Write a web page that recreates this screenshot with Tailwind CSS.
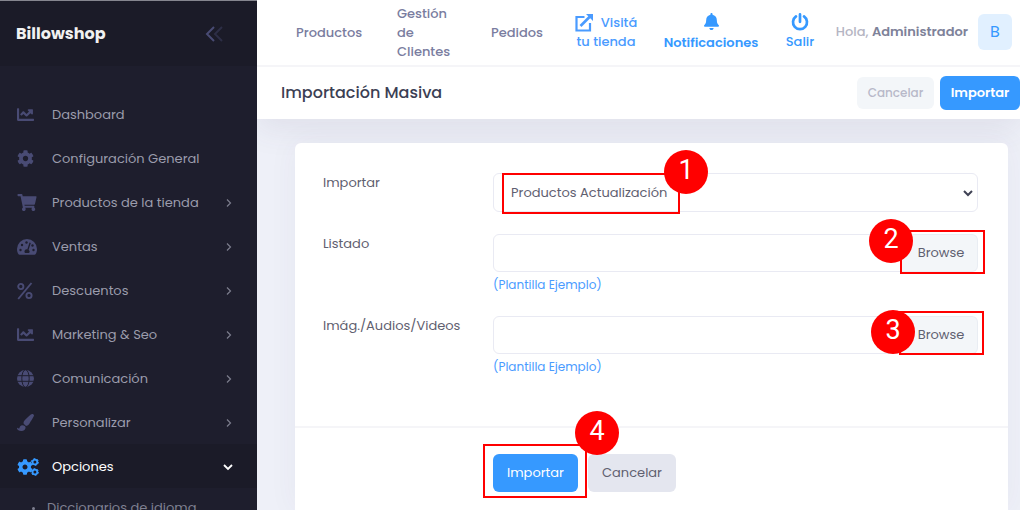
<!DOCTYPE html>
<html lang="es">
<head>
<meta charset="utf-8">
<meta name="viewport" content="width=device-width, initial-scale=1">
<title>Billowshop - Importación Masiva</title>
<script src="https://cdn.jsdelivr.net/npm/@tailwindcss/browser@4"></script>
</head>
<body class="flex h-screen overflow-hidden bg-[#eef0f8] font-[Poppins,Inter,sans-serif] text-[13px] text-[#5f6070]">
<svg class="hidden" aria-hidden="true">
  <symbol id="chart" viewBox="0 0 512 512"><path fill="currentColor" d="M496 384H64V80c0-8.84-7.16-16-16-16H16C7.16 64 0 71.16 0 80v336c0 17.67 14.33 32 32 32h464c8.84 0 16-7.16 16-16v-32c0-8.84-7.16-16-16-16zM464 96H345.94c-21.38 0-32.09 25.85-16.97 40.97l32.4 32.4L288 242.75l-73.37-73.37c-12.5-12.5-32.76-12.5-45.25 0l-68.69 68.69c-6.25 6.25-6.25 16.38 0 22.63l22.62 22.62c6.25 6.25 16.38 6.25 22.63 0L192 237.25l73.37 73.37c12.5 12.5 32.76 12.5 45.25 0l96-96 32.4 32.4c15.12 15.12 40.97 4.41 40.97-16.97V112c.01-8.84-7.15-16-15.99-16z"/></symbol>
  <symbol id="cog" viewBox="0 0 512 512"><path fill="currentColor" d="M487.4 315.7l-42.6-24.6c4.3-23.2 4.3-47 0-70.2l42.6-24.6c4.9-2.8 7.1-8.6 5.5-14-11.1-35.6-30-67.8-54.7-94.6-3.8-4.1-10-5.1-14.8-2.3L380.8 110c-17.9-15.4-38.5-27.3-60.8-35.1V25.8c0-5.6-3.9-10.5-9.4-11.7-36.7-8.2-74.3-7.8-109.2 0-5.5 1.2-9.4 6.1-9.4 11.7V75c-22.2 7.9-42.8 19.8-60.8 35.1L88.7 85.5c-4.9-2.8-11-1.9-14.8 2.3-24.7 26.7-43.6 58.9-54.7 94.6-1.7 5.4.6 11.2 5.5 14L67.3 221c-4.3 23.2-4.3 47 0 70.2l-42.6 24.6c-4.9 2.8-7.1 8.6-5.5 14 11.1 35.6 30 67.8 54.7 94.6 3.8 4.1 10 5.1 14.8 2.3l42.6-24.6c17.9 15.4 38.5 27.3 60.8 35.1v49.2c0 5.6 3.9 10.5 9.4 11.7 36.7 8.2 74.3 7.8 109.2 0 5.5-1.2 9.4-6.1 9.4-11.7v-49.2c22.2-7.9 42.8-19.8 60.8-35.1l42.6 24.6c4.9 2.8 11 1.9 14.8-2.3 24.7-26.7 43.6-58.9 54.7-94.6 1.5-5.5-.7-11.3-5.6-14.1zM256 336c-44.1 0-80-35.9-80-80s35.9-80 80-80 80 35.9 80 80-35.9 80-80 80z"/></symbol>
  <symbol id="cart" viewBox="0 0 576 512"><path fill="currentColor" d="M528.12 301.319l47.273-208C578.806 78.301 567.391 64 551.99 64H159.208l-9.166-44.81C147.758 8.021 137.93 0 126.529 0H24C10.745 0 0 10.745 0 24v16c0 13.255 10.745 24 24 24h69.883l70.248 343.435C147.325 417.1 136 435.222 136 456c0 30.928 25.072 56 56 56s56-25.072 56-56c0-15.674-6.447-29.835-16.824-40h209.647C430.447 426.165 424 440.326 424 456c0 30.928 25.072 56 56 56s56-25.072 56-56c0-22.172-12.888-41.332-31.579-50.405l5.517-24.276c3.413-15.018-8.002-29.319-23.403-29.319H218.117l-6.545-32h293.145c11.206 0 20.92-7.754 23.403-18.681z"/></symbol>
  <symbol id="right" viewBox="0 0 8 10"><path d="M2 1.500L5.500 5 2 8.500" fill="none" stroke="currentColor" stroke-width="1.200" opacity=".75"/></symbol>
</svg>

<aside class="relative z-30 flex w-[257px] shrink-0 flex-col border-t border-[#85868f] bg-[#1e1e2d] text-[#9b9cac]">
  <div class="flex h-[65px] shrink-0 items-center justify-between bg-[#1b1b28] pr-[34px] pl-4">
    <a href="#" class="text-base font-bold text-[#f1f1f1]">Billowshop</a>
    <button type="button" aria-label="Contraer menú" class="text-[#494b74]">
      <svg class="h-4 w-[18px]" viewBox="0 0 18 16" fill="none" stroke="currentColor" stroke-width="2"><path d="M9 1L2 8l7 7"/><path opacity=".4" d="M17 1l-7 7 7 7"/></svg>
    </button>
  </div>
  <nav class="flex flex-col pt-[26px]">
    <a href="#" class="flex h-11 items-center pt-px pr-6 pl-[17px]"><span class="w-[35px] text-[#494b74]"><svg class="size-[17px]"><use href="#chart"/></svg></span><span class="flex-1">Dashboard</span></a>
    <a href="#" class="flex h-11 items-center pt-px pr-6 pl-[17px]"><span class="w-[35px] text-[#494b74]"><svg class="size-[17px]"><use href="#cog"/></svg></span><span class="flex-1">Configuración General</span></a>
    <a href="#" class="flex h-11 items-center pt-px pr-6 pl-[17px]"><span class="w-[35px] text-[#494b74]"><svg class="h-[17px] w-5"><use href="#cart"/></svg></span><span class="flex-1">Productos de la tienda</span><svg class="h-[10px] w-2"><use href="#right"/></svg></a>
    <a href="#" class="flex h-11 items-center pt-px pr-6 pl-[17px]"><span class="w-[35px] text-[#494b74]"><svg class="h-4 w-5" viewBox="0 0 20 16"><path fill="currentColor" d="M10 0A10 10 0 0 0 0 10c0 2 .5 3.600 1.300 5 .3.500.700.700 1.200.700h15c.5 0 .900-.2 1.200-.7.800-1.400 1.300-3 1.300-5A10 10 0 0 0 10 0z"/><g fill="#1e1e2d"><circle cx="3.500" cy="11" r="1.200"/><circle cx="5" cy="6" r="1.200"/><circle cx="9.500" cy="3.500" r="1.200"/><circle cx="15.500" cy="6.500" r="1.200"/><circle cx="16.500" cy="11" r="1.200"/><path d="M12.500 3.600l1.300.4-2.200 6.800a2.300 2.300 0 0 1 .6 3.200H7.900a2.300 2.300 0 0 1 2.400-3.600z"/></g></svg></span><span class="flex-1">Ventas</span><svg class="h-[10px] w-2"><use href="#right"/></svg></a>
    <a href="#" class="flex h-11 items-center pt-px pr-6 pl-[17px]"><span class="w-[35px] text-[#494b74]"><svg class="h-[18px] w-4" viewBox="0 0 16 18" fill="none" stroke="currentColor" stroke-width="1.900"><circle cx="3.800" cy="4.500" r="2.600"/><circle cx="12" cy="13.500" r="2.600"/><path d="M14.500 1L1.200 17"/></svg></span><span class="flex-1">Descuentos</span><svg class="h-[10px] w-2"><use href="#right"/></svg></a>
    <a href="#" class="flex h-11 items-center pt-px pr-6 pl-[17px]"><span class="w-[35px] text-[#494b74]"><svg class="size-[17px]"><use href="#chart"/></svg></span><span class="flex-1">Marketing &amp; Seo</span><svg class="h-[10px] w-2"><use href="#right"/></svg></a>
    <a href="#" class="flex h-11 items-center pt-px pr-6 pl-[17px]"><span class="w-[35px] text-[#494b74]"><svg class="size-[17px]" viewBox="0 0 17 17"><circle cx="8.500" cy="8.500" r="8.500" fill="currentColor"/><g fill="none" stroke="#1e1e2d"><ellipse cx="8.500" cy="8.500" rx="3.700" ry="8.800"/><path d="M0 5.700h17M0 11.300h17"/></g></svg></span><span class="flex-1">Comunicación</span><svg class="h-[10px] w-2"><use href="#right"/></svg></a>
    <a href="#" class="flex h-11 items-center pt-px pr-6 pl-[17px]"><span class="w-[35px] text-[#494b74]"><svg class="size-[17px]" viewBox="0 0 17 17" fill="currentColor"><path d="M15.300 0c-.6 0-1.100.3-1.500.600C8 5.800 6.600 7.200 6.600 9c0 .400.100.900.300 1.300.8.200 1.600.9 2 1.700 1.500-.1 2.700-.9 3.600-2.500C13.900 7 17 2.600 17 1.500 17 .6 16.200 0 15.300 0z"/><path d="M5.400 11.200c-2 0-2.700 1.500-2.900 2.900-.2.500-.7.400-1.600-.2-.3-.2-.9 0-.9.400C.3 16 2 17 4.300 17c2.700 0 4.300-1.500 4.300-3.400 0-1.500-1.300-2.400-3.200-2.400z"/></svg></span><span class="flex-1">Personalizar</span><svg class="h-[10px] w-2"><use href="#right"/></svg></a>
    <a href="#" aria-current="page" class="flex h-11 items-center bg-[#1b1b28] pt-px pr-6 pl-[17px] text-white"><span class="w-[35px] text-[#3699ff]"><svg class="h-[18px] w-[22px]" viewBox="0 0 22 18"><use href="#cog" x="0" y="1" width="16" height="16"/><g fill="none" stroke="currentColor"><circle cx="17.900" cy="4" r="2.400" stroke-width="1.800"/><circle cx="17.900" cy="4" r="3.500" stroke-width="1" stroke-dasharray="1.830"/><circle cx="17.900" cy="14" r="2.400" stroke-width="1.800"/><circle cx="17.900" cy="14" r="3.500" stroke-width="1" stroke-dasharray="1.830"/></g></svg></span><span class="flex-1">Opciones</span><svg class="h-2 w-[10px]" viewBox="0 0 10 8"><path d="M1 2l4 4 4-4" fill="none" stroke="currentColor" stroke-width="1.800"/></svg></a>
    <a href="#" class="flex h-10 items-center gap-3 pl-8 text-[#7f8091]"><span class="size-[3px] rounded-full bg-current"></span>Diccionarios de idioma</a>
  </nav>
</aside>

<div class="flex min-w-0 flex-1 flex-col">
  <header class="relative z-10 shrink-0 bg-white shadow-[0_10px_30px_rgba(82,63,105,0.09)]">
    <div class="flex h-[67px] items-center border-b-2 border-[#f5f5f8] pr-2 pb-px pl-[39px] text-[#7a7da0]">
      <nav class="flex items-center font-medium leading-[19px]">
        <a href="#" class="w-[101px]">Productos</a>
        <a href="#" class="w-[94px]">Gestión<br>de<br>Clientes</a>
        <a href="#" class="w-[77px]">Pedidos</a>
        <a href="#" class="flex w-[76px] flex-col items-center text-[#4a9bff]"><span class="flex items-center gap-2"><svg class="size-[18px]" viewBox="0 0 18 18" fill="none" stroke="currentColor" stroke-width="2.200"><path d="M9.500 3H1.500v13.500H15V9"/><path d="M5.500 12L15 2.500" stroke-width="2.600"/><path d="M11 0h7v7z" fill="currentColor" stroke="none"/></svg>Visitá</span><span>tu tienda</span></a>
        <a href="#" class="ml-[11px] flex w-[112px] flex-col items-center gap-[3px] font-semibold text-[#3699ff]"><svg class="h-[17px] w-[15px]" viewBox="0 0 448 512"><path fill="currentColor" d="M224 512c35.320 0 63.970-28.650 63.970-64H160.030c0 35.350 28.650 64 63.970 64zm215.390-149.710c-19.320-20.760-55.470-51.990-55.470-154.290 0-77.700-54.480-139.900-127.940-155.160V32c0-17.670-14.320-32-31.980-32s-31.980 14.330-31.980 32v20.840C118.560 68.100 64.080 130.300 64.080 208c0 102.300-36.150 133.530-55.470 154.290-6 6.450-8.660 14.160-8.610 21.710.11 16.400 12.980 32 32.100 32h383.800c19.120 0 32-15.600 32.100-32 .05-7.550-2.610-15.270-8.610-21.710z"/></svg><span>Notificaciones</span></a>
        <a href="#" class="ml-[14px] flex w-[38px] flex-col items-center gap-px text-[#3699ff]"><svg class="size-[18px]" viewBox="0 0 18 18" fill="none" stroke="currentColor" stroke-width="2.700" stroke-linecap="round"><path d="M5 3.400a7 7 0 1 0 8 0M9 1.400v7.400"/></svg><span>Salir</span></a>
      </nav>
      <div class="ml-auto flex items-center gap-[10px] whitespace-nowrap">
        <p class="font-medium text-[#b5b5c3]">Hola, <b class="font-semibold text-[#7e8299]">Administrador</b></p>
        <button type="button" class="h-9 w-[34px] rounded-md bg-[#e1f0ff] text-base text-[#3699ff]">B</button>
      </div>
    </div>
    <div class="flex h-[52px] items-center justify-between pl-6">
      <h1 class="text-base font-medium text-[#3c3f54]">Importación Masiva</h1>
      <div class="flex items-center gap-[6px]">
        <button type="button" class="h-8 w-[77px] rounded-md bg-[#f3f6f9] text-xs font-medium text-[#b8b9c9]">Cancelar</button>
        <button type="button" class="h-[34px] w-20 rounded-md bg-[#3699ff] font-semibold text-white">Importar</button>
      </div>
    </div>
  </header>

  <main class="relative z-20 flex min-h-0 flex-1 flex-col pt-6 pr-3 pl-[38px]">
    <form class="flex flex-1 flex-col rounded-t-md bg-white shadow-[0_0_30px_rgba(82,63,105,0.05)]">
      <div class="grid grid-cols-[170px_minmax(0,1fr)] pt-[30px] pr-[30px] pb-[51px] pl-7">
        <label for="tipo" class="h-[61px]">Importar</label>
        <div class="relative h-[39px]">
          <select id="tipo" class="h-full w-full appearance-none rounded-md border border-[#e9eaf3] bg-white pl-[17px]"><option>Productos Actualización</option></select>
          <svg class="pointer-events-none absolute top-4 right-[5px] h-2 w-[10px] text-[#3f4254]" viewBox="0 0 10 8"><path d="M1 2l4 4 4-4" fill="none" stroke="currentColor" stroke-width="2"/></svg>
          <span class="pointer-events-none absolute top-0 left-[9px] h-[41px] w-[178px] border-2 border-[#ff0000]"></span>
          <span class="absolute -top-[23px] left-[171px] flex size-11 items-center justify-center rounded-full bg-[#ff0000] pb-1 font-[Roboto,sans-serif] text-[27px] text-white">1</span>
        </div>
        <label for="listado">Listado</label>
        <div class="h-[82px]">
          <div class="relative flex h-[38px]">
            <input id="listado" type="text" class="min-w-0 flex-1 rounded-l-md border border-[#e9eaf3] bg-white px-3">
            <button type="button" class="w-[76px] rounded-r-md border border-l-0 border-[#e9edf3] bg-[#f3f6f9] pl-[3px]">Browse</button>
            <span class="pointer-events-none absolute -top-1 -right-[7px] h-11 w-[85px] border-2 border-[#ff0000]"></span>
            <span class="absolute -top-[15px] right-[65px] flex size-11 items-center justify-center rounded-full bg-[#ff0000] pb-1 font-[Roboto,sans-serif] text-[27px] text-white">2</span>
          </div>
          <a href="#" class="mt-[5px] block text-xs leading-4 text-[#4a9bff]">(Plantilla Ejemplo)</a>
        </div>
        <label for="medios">Imág./Audios/Videos</label>
        <div>
          <div class="relative flex h-[38px]">
            <input id="medios" type="text" class="min-w-0 flex-1 rounded-l-md border border-[#e9eaf3] bg-white px-3">
            <button type="button" class="w-[76px] rounded-r-md border border-l-0 border-[#e9edf3] bg-[#f3f6f9] pl-[3px]">Browse</button>
            <span class="pointer-events-none absolute -top-[5px] -right-[6px] h-11 w-[85px] border-2 border-[#ff0000]"></span>
            <span class="absolute -top-[6px] right-[63px] flex size-11 items-center justify-center rounded-full bg-[#ff0000] pb-1 font-[Roboto,sans-serif] text-[27px] text-white">3</span>
          </div>
          <a href="#" class="mt-[5px] block text-xs leading-4 text-[#4a9bff]">(Plantilla Ejemplo)</a>
        </div>
      </div>
      <div class="border-t-2 border-[#f5f5f8] pt-[26px] pl-[198px]">
        <div class="relative flex gap-[10px]">
          <button type="submit" class="h-[38px] w-[85px] rounded-md bg-[#3699ff] text-white">Importar</button>
          <button type="button" class="h-[38px] w-[88px] rounded-md bg-[#e4e6ef]">Cancelar</button>
          <span class="pointer-events-none absolute -top-[10px] -left-[10px] h-[54px] w-[104px] border-2 border-[#ff0000]"></span>
          <span class="absolute -top-[43px] left-[82px] flex size-11 items-center justify-center rounded-full bg-[#ff0000] pb-1 font-[Roboto,sans-serif] text-[27px] text-white">4</span>
        </div>
      </div>
    </form>
  </main>
</div>
</body>
</html>
